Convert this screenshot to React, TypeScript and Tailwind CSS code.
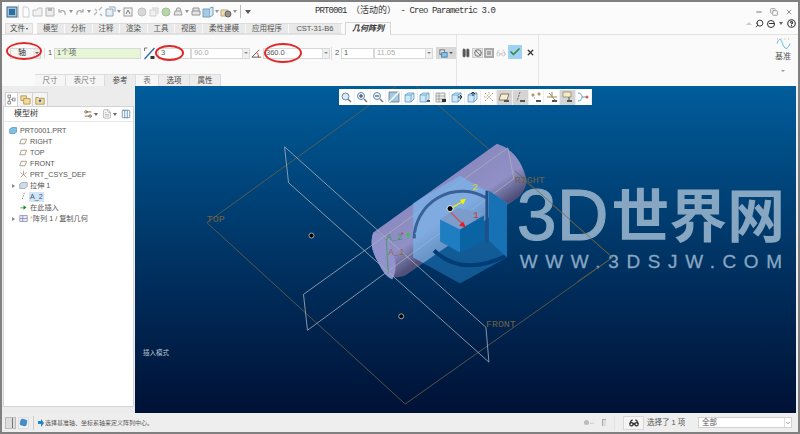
import React from 'react';
import {
  ChevronDown, Pause, Ban, Glasses, Check, X, Search, Minus, Copy, HelpCircle, Settings2, FileText,
  Columns3,
} from 'lucide-react';

const ribbonTabs = [
  { label: '模型', w: 'w-[28px]' },
  { label: '分析', w: 'w-[28px]' },
  { label: '注释', w: 'w-[27px]' },
  { label: '渲染', w: 'w-[28px]' },
  { label: '工具', w: 'w-[27px]' },
  { label: '视图', w: 'w-[28px]' },
  { label: '柔性建模', w: 'w-[43px]' },
  { label: '应用程序', w: 'w-[43px]' },
  { label: 'CST-31-B6', w: 'w-[53px]' },
];

const dashTabs = [
  { label: '尺寸', w: 'w-[31px]', on: false },
  { label: '表尺寸', w: 'w-[39px]', on: false },
  { label: '参考', w: 'w-[31px]', on: true },
  { label: '表', w: 'w-[23px]', on: false },
  { label: '选项', w: 'w-[31px]', on: true },
  { label: '属性', w: 'w-[31px]', on: true },
];

function Caret() {
  return <span className="mx-[1px] h-0 w-0 border-x-[2px] border-t-[3px] border-x-transparent border-t-[#666]" />;
}

function Qat({ children, w = 'w-[12px]' }: { children: React.ReactNode; w?: string }) {
  return (
    <svg viewBox="0 0 12 12" className={`h-[12px] ${w} shrink-0`}>
      {children}
    </svg>
  );
}

function QuickBar() {
  return (
    <div className="flex w-[250px] items-center pl-[4px]">
      <Qat>
        <rect x="1" y="1" width="10" height="10" fill="#9fc4dc" stroke="#44667e" />
        <rect x="3" y="3" width="6" height="6" fill="#2b6f9e" />
      </Qat>
      <span className="mr-[1px] h-[13px] w-px bg-[#ccc]" />
      <div className="flex items-center opacity-70">
        <Qat><path d="M3 1h4l2 2v8H3z" fill="#fff" stroke="#bbb" /></Qat>
        <Qat><path d="M1 10V4h4l1-2h4v8z" fill="#eee" stroke="#aaa" /></Qat>
        <Qat><path d="M2 2h8v8H2z" fill="#e6e6e6" stroke="#999" /><rect x="4" y="2" width="4" height="3" fill="#999" /></Qat>
        <Qat><path d="M9 9c1-4-3-6-6-3M3 3v3h3" fill="none" stroke="#8a8a8a" strokeWidth="1.2" /></Qat>
        <Caret />
        <Qat><path d="M3 9c-1-4 3-6 6-3M9 3v3H6" fill="none" stroke="#8a8a8a" strokeWidth="1.2" /></Qat>
        <Caret />
        <Qat><path d="M2 9l3-3M7 4l3-3M3 3l2 2M8 8l2 2" stroke="#9c9c9c" strokeWidth="1.4" /></Qat>
        <Qat><path d="M2 3h7v7H2z" fill="#dfe8ee" stroke="#5f87a3" /><path d="M5 1h6v5" fill="none" stroke="#5f87a3" /></Qat>
        <Caret />
        <Qat><rect x="2" y="2" width="8" height="8" fill="#f2f2f2" stroke="#777" /><path d="M4 8l2-4 2 4" fill="none" stroke="#444" /></Qat>
        <span className="w-[2px]" />
        <Qat><circle cx="6" cy="6" r="4" fill="#c8c8c8" stroke="#aaa" /></Qat>
        <Qat><path d="M2 4h6v6H2z M4 2h6v6" fill="#eee" stroke="#bbb" /></Qat>
        <Qat><circle cx="6" cy="6" r="4" fill="#9cc58a" stroke="#7ba56b" /></Qat>
        <Qat><path d="M2 9h8l-1-4H3z M4 5l1-3h3l1 3" fill="#ddd" stroke="#777" /></Qat>
        <Caret />
        <Qat><path d="M3 5V2h6v3M2 5h8v4H2z" fill="#ddd" stroke="#666" /></Qat>
        <Qat><path d="M1 3h7v8H1z" fill="#7fb8dc" stroke="#3f7ca3" /><path d="M8 2l3-1v8l-3 2" fill="#c6e0f0" stroke="#3f7ca3" /></Qat>
        <Caret />
        <Qat><path d="M1 4h7v6H1z" fill="#e9cf8e" stroke="#a08650" /><circle cx="8" cy="8" r="3" fill="#666" stroke="#222" /></Qat>
        <Caret />
      </div>
      <span className="ml-[2px] h-[13px] w-px bg-[#bbb]" />
      <span className="ml-[4px] h-0 w-0 border-x-[3px] border-t-[4px] border-x-transparent border-t-[#555]" />
    </div>
  );
}

function TitleRow() {
  return (
    <div className="flex h-[19px] shrink-0 items-center bg-[#fbfbfb]">
      <QuickBar />
      <div className="ml-[63px] flex-1 whitespace-nowrap text-[9px] tracking-[-0.9px] text-[#333] [font-family:'Liberation_Mono','Noto_Sans_CJK_SC',monospace]">
        PRT0001 <span className="tracking-normal">（活动的）</span> - Creo Parametric 3.0
      </div>
      <div className="flex items-center gap-[7px] pr-[5px] text-[#777]">
        <Minus size={8} strokeWidth={3} />
        <Copy size={8} strokeWidth={2} />
        <X size={8} strokeWidth={2.5} />
      </div>
    </div>
  );
}

function TabRow() {
  return (
    <div className="flex h-[13px] shrink-0 items-end bg-[#fbfbfb] pl-[3px]">
      <div className="flex h-[11px] w-[28px] items-center justify-center border border-[#ddd] bg-[#eeeeee] text-[7.5px] leading-none text-[#444]">
        文件
        <span className="ml-[1px] h-0 w-0 border-x-[1.5px] border-t-[2px] border-x-transparent border-t-[#444]" />
      </div>
      <div className="ml-[4px] flex h-[11px] border-y border-[#ddd] bg-[#e9e9e9]">
        {ribbonTabs.map(t => (
          <div
            key={t.label}
            className={`flex ${t.w} items-center justify-center border-r border-[#fafafa] text-[7.5px] leading-none text-[#555]`}
          >
            {t.label}
          </div>
        ))}
      </div>
      <div className="relative top-px ml-[3px] flex h-[13px] w-[46px] items-center justify-center border-x border-t border-[#d6d6d6] bg-[#fafafa] text-[8px] font-semibold italic leading-none text-[#333]">
        几何阵列
      </div>
      <div className="-mt-[2px] flex flex-1 items-center justify-end gap-[3px] self-start pr-[2px] text-[#333]">
        <span className="h-0 w-0 border-x-[3px] border-b-[3px] border-x-transparent border-b-[#ccc]" />
        <Search size={9} strokeWidth={2.5} className="-scale-x-100" />
        <span className="flex h-[8px] w-[8px] items-center justify-center rounded-full border-[1.5px] border-[#333]">
          <span className="h-px w-[5px] bg-[#333]" />
        </span>
        <Caret />
        <HelpCircle size={9} strokeWidth={3} />
      </div>
    </div>
  );
}

function Field({ w, text, dim, drop, bg }: { w: string; text: string; dim?: boolean; drop?: boolean; bg?: string }) {
  return (
    <div className={`flex h-[11px] ${w} shrink-0 items-center border border-[#d8d8d8] ${bg ?? 'bg-white'}`}>
      <span className={`flex-1 pl-[2px] text-[7.5px] leading-none ${dim ? 'text-[#aaa]' : 'text-[#555]'}`}>{text}</span>
      {drop && (
        <span className="flex h-full w-[7px] items-center justify-center border-l border-[#ddd] bg-[#f0f0f0]">
          <span className="h-0 w-0 border-x-[2px] border-t-[2px] border-x-transparent border-t-[#888]" />
        </span>
      )}
    </div>
  );
}

function Ribbon() {
  return (
    <div className="flex h-[52px] shrink-0 border-t border-[#e2e2e2] bg-[#fafafa]">
      <div className="flex w-[455px] flex-col border-r border-[#e4e4e4]">
        <div className="flex flex-1 items-center pb-[3px] pl-[8px]">
          <div className="flex h-[11px] w-[31px] items-center border border-[#d8d8d8] bg-[#f4f4f4]">
            <span className="flex-1 text-center text-[8px] leading-none text-[#333]">轴</span>
            <span className="flex h-full w-[7px] items-center justify-center bg-[#e8e8e8]">
              <span className="h-0 w-0 border-x-[2px] border-t-[2px] border-x-transparent border-t-[#666]" />
            </span>
          </div>
          <span className="mx-[3px] h-[11px] w-px bg-[#ddd]" />
          <span className="w-[6px] text-[7.5px] leading-none text-[#555]">1</span>
          <Field w="w-[87px]" text="1个项" bg="bg-[#e8f6d8]" />
          <svg viewBox="0 0 12 14" className="mx-[2px] h-[14px] w-[13px] shrink-0">
            <path d="M1 13L11 2" stroke="#2a6fa8" strokeWidth="1.3" />
            <path d="M1 2h3M1 2v3" stroke="#777" fill="none" />
            <rect x="7" y="10" width="4" height="3" fill="#333" />
          </svg>
          <Field w="w-[33px]" text="3" />
          <Field w="w-[59px]" text="90.0" dim drop />
          <svg viewBox="0 0 12 12" className="mx-[1px] h-[11px] w-[11px] shrink-0">
            <path d="M1 10L9 2M1 10h10" stroke="#555" fill="none" />
            <path d="M6 5c2 1 2 3 2 5" stroke="#a33" fill="none" />
          </svg>
          <Field w="w-[67px]" text="360.0" drop />
          <span className="mx-[1px] h-[13px] w-px bg-[#ddd]" />
          <span className="w-[8px] pl-[2px] text-[7.5px] leading-none text-[#555]">2</span>
          <Field w="w-[33px]" text="1" />
          <Field w="w-[59px]" text="11.05" dim drop />
          <div className="ml-[3px] flex h-[12px] w-[20px] shrink-0 items-center justify-center gap-[1px] bg-[#d8d8d8]">
            <svg viewBox="0 0 10 10" className="h-[9px] w-[9px]">
              <rect x="1" y="1" width="5" height="5" fill="#eee" stroke="#666" />
              <rect x="3" y="4" width="6" height="5" fill="#8cc2e8" stroke="#3b7fb0" />
            </svg>
            <span className="h-0 w-0 border-x-[2px] border-t-[2px] border-x-transparent border-t-[#555]" />
          </div>
        </div>
        <div className="flex h-[12px] items-end pl-[33px]">
          {dashTabs.map(t => (
            <div
              key={t.label}
              className={`flex h-[12px] ${t.w} items-center justify-center border-r border-t border-[#dcdcdc] text-[7.5px] leading-none ${
                t.on ? 'bg-[#ececec] text-[#444]' : 'bg-[#f6f6f6] text-[#777]'
              }`}
            >
              {t.label}
            </div>
          ))}
        </div>
      </div>
      <div className="flex w-[82px] items-start gap-[1px] border-r border-[#e4e4e4] pl-[4px] pt-[12px]">
        <Pause size={10} className="mt-[1px]" fill="#555" stroke="#555" />
        <span className="mt-[1px] flex h-[10px] w-[11px] items-center justify-center border border-[#ccc] bg-[#e4e4e4]">
          <Ban size={8} strokeWidth={2.5} className="text-[#666]" />
        </span>
        <span className="mt-[1px] flex h-[10px] w-[10px] items-center justify-center bg-[#aaa]">
          <span className="h-[6px] w-[6px] border border-[#ddd]" />
        </span>
        <Glasses size={10} className="ml-[1px] mt-[1px] text-[#c4c4c4]" />
        <span className="-mt-[2px] ml-[1px] flex h-[14px] w-[14px] items-center justify-center rounded-[1px] bg-[#9ed2f5]">
          <Check size={12} strokeWidth={3.5} className="text-[#3f8a3a]" />
        </span>
        <X size={9} strokeWidth={3.5} className="ml-[3px] mt-[1px] text-[#333]" />
      </div>
      <div className="flex flex-1 flex-col items-end pr-[5px] pt-[3px]">
        <div className="flex w-[20px] flex-col items-center">
          <svg viewBox="0 0 16 14" className="h-[13px] w-[15px]">
            <path d="M1 6c2-6 4-6 6 0s5 8 8 0" stroke="#5ab5e0" strokeWidth="1" fill="none" />
            <path d="M1 1h14" stroke="#aaa" strokeDasharray="1 3" />
          </svg>
          <span className="mt-[2px] text-[8px] leading-none text-[#555]">基准</span>
          <span className="mt-[9px] h-0 w-0 border-x-[2px] border-t-[2px] border-x-transparent border-t-[#999]" />
        </div>
      </div>
    </div>
  );
}

const treeIcon = {
  part: <path d="M1 4l3-2h6v6l-2 2H1z" fill="#7fc0e6" stroke="#3f86b0" strokeWidth="0.8" />,
  plane: <path d="M1 9l2-6h7L8 9z" fill="#fafafa" stroke="#8a7a5a" strokeWidth="0.9" />,
  csys: <path d="M6 6V1M6 6L2 10M6 6l4 4M2 3l3 3M10 3L7 6" stroke="#8a7a5a" strokeWidth="0.9" fill="none" />,
  axis: <path d="M7 1L4 11" stroke="#555" strokeWidth="0.9" strokeDasharray="2 1.5" />,
  insert: <path d="M2 6h4V3l4 3-4 3V7H2z" fill="#1f8a2c" />,
  extrude: <path d="M1 4l3-2h7v5l-3 3H1z" fill="#d0dbe8" stroke="#7a8ea3" strokeWidth="0.8" />,
  pattern: <path d="M1 2h10v8H1zM5 2v8M1 6h10" fill="#e8e8f4" stroke="#7070a8" strokeWidth="0.8" />,
};

const treeRows: { icon: keyof typeof treeIcon; label: React.ReactNode; indent: string; arrow?: boolean; sel?: boolean }[] = [
  { icon: 'part', label: 'PRT0001.PRT', indent: 'pl-[5px]' },
  { icon: 'plane', label: 'RIGHT', indent: 'pl-[15px]' },
  { icon: 'plane', label: 'TOP', indent: 'pl-[15px]' },
  { icon: 'plane', label: 'FRONT', indent: 'pl-[15px]' },
  { icon: 'csys', label: 'PRT_CSYS_DEF', indent: 'pl-[15px]' },
  { icon: 'extrude', label: '拉伸 1', indent: 'pl-[15px]', arrow: true },
  { icon: 'axis', label: 'A_2', indent: 'pl-[15px]', sel: true },
  { icon: 'insert', label: '在此插入', indent: 'pl-[15px]' },
  {
    icon: 'pattern',
    label: (
      <>
        <span className="text-[#d8c040]">*</span>阵列 1 / 复制几何
      </>
    ),
    indent: 'pl-[15px]',
    arrow: true,
  },
];

function ModelTree() {
  return (
    <div className="flex w-[133px] shrink-0 flex-col bg-[#ececec] pb-[6px] pl-[1px] pr-px pt-[6px]">
      <div className="flex h-[14px] items-end pl-[2px]">
        <div className="flex h-[14px] w-[13px] items-center justify-center border-x border-t border-[#d0d0d0] bg-white">
          <svg viewBox="0 0 10 12" className="h-[11px] w-[9px]">
            <path d="M1 1h3v3H1zM6 4.500h3v3H6zM1 8h3v3H1zM2.500 4v4M4 6h2" fill="none" stroke="#666" strokeWidth="0.8" />
          </svg>
        </div>
        <div className="flex h-[14px] w-[15px] items-center justify-center border-r border-t border-[#d4d4d4] bg-[#f4f4f4]">
          <svg viewBox="0 0 12 12" className="h-[11px] w-[11px]">
            <path d="M1 2h6v5H1z" fill="#f4dca0" stroke="#b89a50" />
            <path d="M4 5h7v6H4z" fill="#f4dca0" stroke="#b89a50" />
          </svg>
        </div>
        <div className="flex h-[14px] w-[15px] items-center justify-center border-r border-t border-[#d4d4d4] bg-[#f4f4f4]">
          <svg viewBox="0 0 12 12" className="h-[10px] w-[10px]">
            <path d="M1 3h3l1 1h6v7H1z" fill="#f4dca0" stroke="#a89050" />
            <circle cx="6" cy="7" r="1.500" fill="#2a6fa8" />
          </svg>
        </div>
      </div>
      <div className="flex flex-1 flex-col border border-[#d4d4d4] bg-white">
        <div className="flex h-[14px] items-center pl-[10px] pr-[2px]">
          <span className="flex-1 text-[8px] leading-none text-[#333]">模型树</span>
          <Settings2 size={10} className="text-[#7a5a30]" />
          <Caret />
          <FileText size={10} className="ml-[3px] text-[#aaa]" />
          <Caret />
          <Columns3 size={10} className="ml-[3px] text-[#5a8aa8]" />
        </div>
        <div className="border-t border-[#e8e8e8] pt-[3px]">
          {treeRows.map((r, i) => (
            <div key={i} className={`relative flex h-[11px] items-center ${r.indent}`}>
              {r.arrow && (
                <span className="absolute left-[8px] h-0 w-0 border-y-[2.5px] border-l-[3px] border-y-transparent border-l-[#888]" />
              )}
              <svg viewBox="0 0 12 12" className="mr-[1px] h-[9px] w-[9px] shrink-0">
                {treeIcon[r.icon]}
              </svg>
              <span
                className={`whitespace-nowrap px-[1px] text-[7.2px] leading-[10px] text-[#555] ${r.sel ? 'bg-[#cfe6fa]' : ''}`}
              >
                {r.label}
              </span>
            </div>
          ))}
        </div>
      </div>
    </div>
  );
}

function ViewButton({ on, children }: { on?: boolean; children: React.ReactNode }) {
  return (
    <div className={`flex h-[15px] w-[15.800px] items-center justify-center border-r border-[#eee] ${on ? 'bg-[#d4d4d4]' : 'bg-white'}`}>
      <svg viewBox="0 0 12 12" className="h-[12px] w-[12px]">
        {children}
      </svg>
    </div>
  );
}

const cube = <path d="M1 4l3-2h6v6l-3 3H1zM1 4h6v7M7 4l3-2" fill="#cfe8f8" stroke="#5d9cc8" strokeWidth="0.8" />;

function ViewToolbar() {
  return (
    <div className="absolute left-[204px] top-[3px] flex h-[16px] items-center bg-white">
      <ViewButton><circle cx="5.500" cy="5.500" r="3.500" fill="#d8eafa" stroke="#6a8aa8" /><path d="M8 8l3 3" stroke="#777" strokeWidth="1.4" /></ViewButton>
      <ViewButton><circle cx="5" cy="5" r="3.500" fill="#eaf4fb" stroke="#5e8cb0" /><path d="M3 5h4M5 3v4" stroke="#335" /><path d="M8 8l3 3" stroke="#777" strokeWidth="1.4" /></ViewButton>
      <ViewButton><circle cx="5" cy="5" r="3.500" fill="#eaf4fb" stroke="#5e8cb0" /><path d="M3 5h4" stroke="#335" /><path d="M8 8l3 3" stroke="#777" strokeWidth="1.4" /></ViewButton>
      <ViewButton><path d="M1 1h10v10H1z" fill="#9fcbe8" stroke="#666" strokeWidth="0.7" /><path d="M1 11L11 1" stroke="#fff" strokeWidth="1.5" /></ViewButton>
      <ViewButton>{cube}</ViewButton>
      <ViewButton>{cube}<rect x="8" y="9" width="3" height="2" fill="#555" /></ViewButton>
      <ViewButton><path d="M1 2h9v9H1zM1 5h9M1 8h9M4 2v9" fill="#eee" stroke="#888" strokeWidth="0.7" /><rect x="7" y="8" width="4" height="3" fill="#333" /></ViewButton>
      <ViewButton>{cube}<path d="M7 6h4M9 4l2 2-2 2" stroke="#333" fill="none" /></ViewButton>
      <ViewButton>{cube}<path d="M6 1v4M4 3l2-2 2 2" stroke="#333" fill="none" /></ViewButton>
      <ViewButton><path d="M2 10l8-8M2 2l8 8M6 1v3M1 6h3" stroke="#b09a6a" strokeDasharray="1.500 1" /></ViewButton>
      <ViewButton on><path d="M1 9l2-6h8L9 9z" fill="#f4efdc" stroke="#8a7a4a" /><rect x="6" y="9" width="5" height="2" fill="#555" /></ViewButton>
      <ViewButton on><path d="M6 1L3 10" stroke="#7a6a3a" strokeDasharray="2 1" /><rect x="6" y="9" width="5" height="2" fill="#555" /></ViewButton>
      <ViewButton><path d="M2 3h2v2H2zM8 2h2v2H8zM4 7h1" fill="#b09a6a" stroke="#b09a6a" /><rect x="6" y="9" width="5" height="2" fill="#555" /></ViewButton>
      <ViewButton><path d="M6 6V1M6 6H1M6 6h5M3 2l6 7" stroke="#a08a50" /><rect x="6" y="9" width="5" height="2" fill="#555" /></ViewButton>
      <ViewButton on><path d="M1 1h8v5H1z" fill="#f8ecc0" stroke="#998" /><path d="M7 6v4" stroke="#555" /><rect x="5" y="9" width="5" height="2" fill="#555" /></ViewButton>
      <ViewButton><path d="M1 2c4 0 4 4 4 4s0 4-4 4M5 6h5" fill="none" stroke="#5aa0b8" /><circle cx="10" cy="6" r="1.500" fill="#d85a5a" /></ViewButton>
    </div>
  );
}

const cylPath = 'M373 232 L497 143 Q520 150 527 180 Q526 190 518 197 L405 275 Q388 282 378 262 Q368 245 373 232 Z';

function Scene() {
  return (
    <svg viewBox="135 85 661 328" className="absolute inset-0 h-full w-full">
      <defs>
        <linearGradient id="cyl" gradientUnits="userSpaceOnUse" x1="432" y1="188" x2="462" y2="232">
          <stop offset="0" stopColor="#8a8ac0" />
          <stop offset="0.6" stopColor="#9090c6" />
          <stop offset="1" stopColor="#50507a" />
        </linearGradient>
        <clipPath id="cylClip">
          <path d={cylPath} />
        </clipPath>
      </defs>
      <polygon points="206,222 407,77 613,257 405,404" fill="none" stroke="#6c6048" strokeWidth="0.8" />
      <path d={cylPath} fill="url(#cyl)" />
      <path d="M373 232 Q384 232 392 250 Q399 266 392 279 Q384 276 378 262 Q368 245 373 232 Z" fill="#9292cc" />
      <g fill="none" stroke="#aab0ba" strokeWidth="0.8">
        <polygon points="284,146 486,327 489,362 288,182" />
        <polygon points="303,294 508,147 514,178 307,330" />
      </g>
      <path d="M386 238 L388 273" stroke="#3a9a5a" strokeWidth="0.8" />
      {/* watermark logo */}
      <polygon points="460,175 507,202 507,257 460,283 413,257 413,202" fill="#2a92dc" opacity="0.42" />
      <g clipPath="url(#cylClip)">
        <polygon points="460,175 507,202 507,257 460,283 413,257 413,202" fill="#a8d4ff" opacity="0.4" />
      </g>
      <path d="M414 238 A48 48 0 0 1 486 197" fill="none" stroke="#3a6098" strokeWidth="3" />
      <path d="M434 250 Q462 277 507 255" fill="none" stroke="#003c76" strokeWidth="4" />
      <polygon points="440,219 458,207 484,213 460,229" fill="#7c9ccc" />
      <polygon points="440,219 460,229 460,252 440,241" fill="#1f7ec2" />
      <polygon points="460,229 484,215 484,240 460,252" fill="#0a64a4" />
      <polygon points="489,190 507,202 507,257 489,240" fill="#1672b4" />
      <path d="M487 190 V242" stroke="#1f4f88" strokeWidth="3" />
      {/* axes */}
      <path d="M452 207 L464 200" stroke="#f2f200" strokeWidth="1.2" />
      <polygon points="466,198 460,199 463,204" fill="#f2f200" />
      <path d="M451 212 L464 225" stroke="#e04040" strokeWidth="1.2" />
      <polygon points="466,227 459,225 463,221" fill="#e02020" />
      <circle cx="402" cy="233" r="1" fill="#e03030" />
      <circle cx="408" cy="234" r="1.500" fill="#20d040" />
      <path d="M408 234 V238" stroke="#20d040" />
      <circle cx="416" cy="233" r="1" fill="#40d0f0" />
      <circle cx="450" cy="208" r="3" fill="#000" stroke="#fff" strokeWidth="0.8" />
      <circle cx="311" cy="235" r="2.500" fill="#000" stroke="#ddd" strokeWidth="0.7" />
      <circle cx="401" cy="316" r="2.500" fill="#000" stroke="#ddd" strokeWidth="0.7" />
      {/* datum labels */}
      <g className="[font-family:'Liberation_Mono',monospace]" fontSize="10" fill="#6f6248">
        <text x="206" y="221">TOP</text>
        <text x="515" y="182" textLength="30">RIGHT</text>
        <text x="486" y="327" textLength="30">FRONT</text>
        <text x="388" y="255" fill="#8a6a48" fontSize="9">A_1</text>
        <text x="386" y="239" fill="#3a9a5a" fontSize="9">A_2</text>
        <text x="472" y="189" fill="#d8d820">2</text>
        <text x="473" y="217" fill="#c04040">1</text>
      </g>
      <text x="142" y="355" fontSize="6.5" fill="#b8c4d4" className="[font-family:'Noto_Sans_CJK_SC',sans-serif]">插入模式</text>
      {/* site watermark */}
      <g fill="#87a6c2">
        <text x="517" y="239" fontSize="72" stroke="#87a6c2" strokeWidth="1" className="[font-family:'Liberation_Sans',sans-serif]">3D</text>
        <text x="612" y="236" fontSize="58" textLength="174" className="[font-family:'Noto_Sans_CJK_SC',sans-serif]" fontWeight="700">世界网</text>
        <text x="520" y="268" fontSize="19" textLength="263" stroke="#87a6c2" strokeWidth="0.3" className="[font-family:'Liberation_Sans',sans-serif]">WWW.3DSJW.COM</text>
      </g>
      <path d="M515 170 L613 257 L578 281" fill="none" stroke="#6c6048" strokeWidth="0.7" />
    </svg>
  );
}

function Viewport() {
  return (
    <div className="relative flex-1 bg-gradient-to-b from-[#005d9b] to-[#001135]">
      <Scene />
      <ViewToolbar />
    </div>
  );
}

function StatusBar() {
  return (
    <div className="flex h-[19px] shrink-0 items-center bg-[#eeeeee] pl-[3px] pr-[6px]">
      <span className="flex h-[12px] w-[11px] items-center justify-center border border-[#bbb] bg-[#ddd]">
        <span className="h-[10px] w-[4px] border-r border-[#777]" />
      </span>
      <span className="ml-[2px] flex h-[12px] w-[11px] items-center justify-center border border-[#ddd] bg-[#f4f4f4]">
        <span className="h-[7px] w-[7px] rotate-12 rounded-[2px] bg-[#4a8cc8]" />
      </span>
      <span className="mx-[4px] h-[14px] w-px bg-[#ccc]" />
      <span className="h-[3px] w-[3px] bg-[#1f86d0]" />
      <span className="mr-[1px] h-0 w-0 border-y-[4px] border-l-[3px] border-y-transparent border-l-[#1f86d0]" />
      <span className="text-[6px] leading-none text-[#555]">选择基准轴、坐标系轴来定义阵列中心。</span>
      <div className="flex-1" />
      <span className="h-[5px] w-[5px] rounded-full bg-[#bbb]" />
      <span className="ml-[1px] text-[6px] leading-none text-[#ccc]">••</span>
      <span className="ml-[8px] h-[7px] w-[4px] border-l border-t border-[#aaa] bg-[#ddd]" />
      <span className="mx-[8px] h-[14px] w-px bg-[#e4e4e4]" />
      <span className="flex h-[14px] w-[21px] items-center justify-center border border-[#d8d8d8] bg-[#f4f4f4]">
        <Glasses size={10} strokeWidth={3} className="text-[#333]" />
      </span>
      <span className="ml-[3px] w-[51px] text-[7.5px] leading-none text-[#555]">选择了 1 项</span>
      <div className="flex h-[11px] w-[94px] items-center border border-[#d0d0d0] bg-white">
        <span className="flex-1 pl-[3px] text-[7.5px] leading-none text-[#555]">全部</span>
        <span className="flex h-full w-[7px] items-center justify-center border-l border-[#ddd]">
          <ChevronDown size={6} strokeWidth={3} className="text-[#777]" />
        </span>
      </div>
    </div>
  );
}

export default function App() {
  return (
    <div className="relative flex h-[434px] w-[800px] flex-col overflow-hidden border-2 border-[#808080] bg-[#eeeeee] [font-family:'Liberation_Sans','Noto_Sans_CJK_SC',sans-serif]">
      <TitleRow />
      <TabRow />
      <Ribbon />
      <div className="flex min-h-0 flex-1">
        <ModelTree />
        <Viewport />
        <div className="w-[2px] shrink-0 bg-[#eeeeee]" />
      </div>
      <StatusBar />
      {/* red marks drawn on the screenshot */}
      <span className="absolute left-[4px] top-[40px] h-[18px] w-[36px] rounded-[50%] border-2 border-[#e02828]" />
      <span className="absolute left-[153px] top-[43px] h-[16px] w-[29px] rounded-[50%] border-2 border-[#e02828]" />
      <span className="absolute left-[262px] top-[41px] h-[20px] w-[38px] rounded-[50%] border-2 border-[#e02828]" />
    </div>
  );
}
